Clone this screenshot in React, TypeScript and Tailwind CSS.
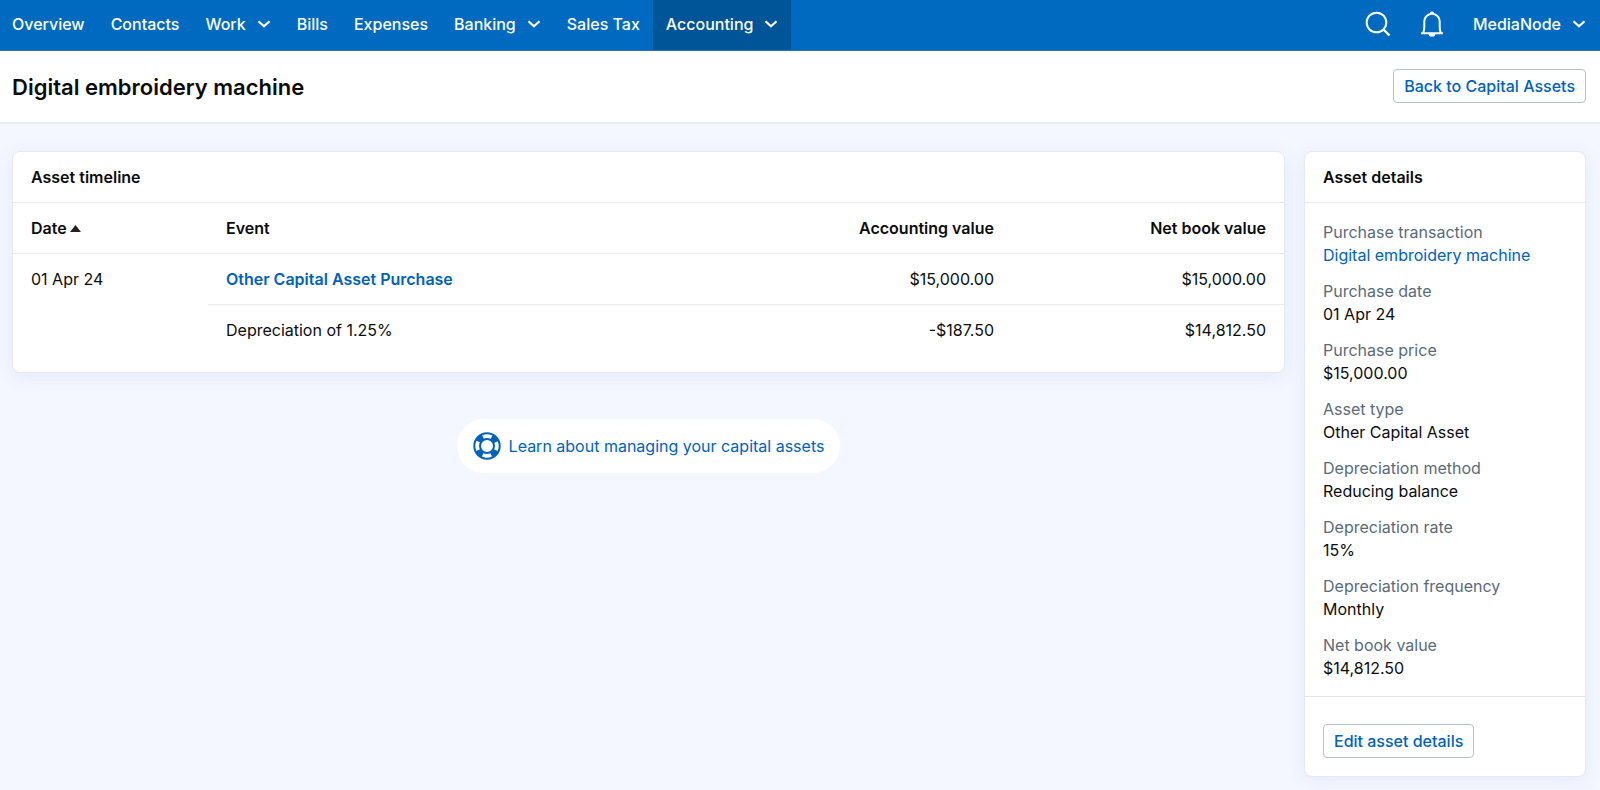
import React from 'react';

type NavItem = { label: string; menu?: boolean; active?: boolean };

const navItems: NavItem[] = [
  { label: 'Overview' },
  { label: 'Contacts' },
  { label: 'Work', menu: true },
  { label: 'Bills' },
  { label: 'Expenses' },
  { label: 'Banking', menu: true },
  { label: 'Sales Tax' },
  { label: 'Accounting', menu: true, active: true },
];

const details = [
  { term: 'Purchase transaction', value: 'Digital embroidery machine', link: true },
  { term: 'Purchase date', value: '01 Apr 24' },
  { term: 'Purchase price', value: '$15,000.00' },
  { term: 'Asset type', value: 'Other Capital Asset' },
  { term: 'Depreciation method', value: 'Reducing balance' },
  { term: 'Depreciation rate', value: '15%' },
  { term: 'Depreciation frequency', value: 'Monthly' },
  { term: 'Net book value', value: '$14,812.50' },
];

function Chevron() {
  return (
    <svg width="14" height="8" viewBox="0 0 14 8" fill="none" stroke="currentColor" strokeWidth="2.2" aria-hidden="true">
      <path d="M1.5 1.2 7 6.2l5.5-5" />
    </svg>
  );
}

function SearchIcon() {
  return (
    <svg width="26" height="26" viewBox="0 0 26 26" fill="none" stroke="currentColor" strokeWidth="2" aria-hidden="true">
      <circle cx="11.5" cy="11.5" r="9.8" />
      <path d="m18.5 18.5 6 6" strokeWidth="2.4" />
    </svg>
  );
}

function BellIcon() {
  return (
    <svg width="24" height="26" viewBox="0 0 24 26" fill="none" stroke="currentColor" strokeWidth="2" aria-hidden="true">
      <path d="M1 22.3h22M3.2 22c.8-2 1.1-3.5 1.1-6v-5.5a7.7 7.7 0 0 1 15.4 0V16c0 2.5.3 4 1.1 6" />
      <path d="M8.5 22.5h7a3.5 3.2 0 0 1-7 0zM9.8 2.8a2.2 2.3 0 0 1 4.4 0z" fill="currentColor" stroke="none" />
    </svg>
  );
}

function LifebuoyIcon() {
  return (
    <svg width="28" height="28" viewBox="0 0 28 28" fill="none" stroke="currentColor" aria-hidden="true">
      <circle cx="14" cy="14" r="12.7" strokeWidth="2" />
      <circle cx="14" cy="14" r="7" strokeWidth="2" />
      <circle cx="14" cy="14" r="10" strokeWidth="6" strokeDasharray="6.8 8.908" strokeDashoffset="-4.45" />
    </svg>
  );
}

function Card({ title, className = '', children }: { title: string; className?: string; children: React.ReactNode }) {
  return (
    <section
      className={`rounded-lg border border-[#e6e9f2] bg-white shadow-[0_4px_20px_rgba(60,90,200,0.08)] ${className}`}
    >
      <h2 className="border-b border-[#e8eaf2] px-[18px] py-[13px] text-base leading-6 font-semibold">{title}</h2>
      {children}
    </section>
  );
}

export default function App() {
  return (
    <div className="min-h-screen bg-[#f4f7ff] font-['Inter',sans-serif] text-base text-[#0b0c0c]">
      <nav className="flex h-[51px] items-stretch justify-between border-b border-[#2f6fb5] bg-[#006ac1] font-medium text-white">
        <ul className="flex">
          {navItems.map((item) => (
            <li key={item.label} className="flex first:-ml-px">
              <a
                href="#"
                className={`flex items-center gap-[11px] px-[13px] pb-[2px] ${item.active ? 'bg-[#005598]' : ''}`}
              >
                {item.label}
                {item.menu && <Chevron />}
              </a>
            </li>
          ))}
        </ul>
        <div className="flex items-center gap-[29px] pr-[14px] pb-[2px]">
          <button type="button" aria-label="Search">
            <SearchIcon />
          </button>
          <button type="button" aria-label="Notifications">
            <BellIcon />
          </button>
          <button type="button" className="flex items-center gap-[11px]">
            MediaNode
            <Chevron />
          </button>
        </div>
      </nav>

      <header className="flex items-center justify-between border-b-2 border-[#e9edf3] bg-white pt-[18px] pr-[14px] pb-[19px] pl-3">
        <h1 className="pt-[2px] text-[22px] leading-8 font-semibold">Digital embroidery machine</h1>
        <button type="button" className="h-[34px] rounded border border-[#b9c0c8] px-[10px] font-medium text-[#0062bd]">
          Back to Capital Assets
        </button>
      </header>

      <main className="flex items-start gap-[19px] pt-[27px] pr-[14px] pb-[14px] pl-3">
        <div className="min-w-0 flex-1">
          <Card title="Asset timeline" className="pb-[17px]">
            <table className="w-full table-fixed border-collapse leading-6">
              <thead>
                <tr className="border-b border-[#e8eaf2]">
                  <th className="w-[195px] px-[18px] py-[13px] text-left font-semibold">
                    <span className="flex items-center gap-[3px]">
                      Date
                      <svg width="11" height="7" viewBox="0 0 11 7" fill="#222" aria-hidden="true">
                        <path d="M0 7 5.5 0 11 7z" />
                      </svg>
                    </span>
                  </th>
                  <th className="px-[18px] text-left font-semibold">Event</th>
                  <th className="w-[272px] px-[18px] text-right font-semibold">Accounting value</th>
                  <th className="w-[272px] px-[18px] text-right font-semibold">Net book value</th>
                </tr>
              </thead>
              <tbody>
                <tr>
                  <td rowSpan={2} className="px-[18px] py-[13px] align-top">
                    01 Apr 24
                  </td>
                  <td className="border-b border-[#e8eaf2] px-[18px] py-[13px]">
                    <a href="#" className="font-semibold text-[#0062bd]">
                      Other Capital Asset Purchase
                    </a>
                  </td>
                  <td className="border-b border-[#e8eaf2] px-[18px] text-right">$15,000.00</td>
                  <td className="border-b border-[#e8eaf2] px-[18px] text-right">$15,000.00</td>
                </tr>
                <tr>
                  <td className="px-[18px] py-[13px]">Depreciation of 1.25%</td>
                  <td className="px-[18px] text-right">-$187.50</td>
                  <td className="px-[18px] text-right">$14,812.50</td>
                </tr>
              </tbody>
            </table>
          </Card>

          <div className="mt-[46px] flex justify-center">
            <a href="#" className="flex h-[54px] items-center gap-2 rounded-full bg-white px-4 text-[#0062bd]">
              <LifebuoyIcon />
              Learn about managing your capital assets
            </a>
          </div>
        </div>

        <Card title="Asset details" className="w-[282px] shrink-0">
          <dl className="space-y-[13px] px-[18px] pt-[18px] pb-4 leading-[23px]">
            {details.map((item) => (
              <div key={item.term}>
                <dt className="text-[#5a6b78]">{item.term}</dt>
                <dd>
                  {item.link ? (
                    <a href="#" className="text-[#0062bd]">
                      {item.value}
                    </a>
                  ) : (
                    item.value
                  )}
                </dd>
              </div>
            ))}
          </dl>
          <div className="border-t border-[#e0e3ea] px-[18px] pt-[27px] pb-[18px]">
            <button type="button" className="h-[34px] rounded border border-[#b9c0c8] px-[10px] font-medium text-[#0062bd]">
              Edit asset details
            </button>
          </div>
        </Card>
      </main>
    </div>
  );
}
